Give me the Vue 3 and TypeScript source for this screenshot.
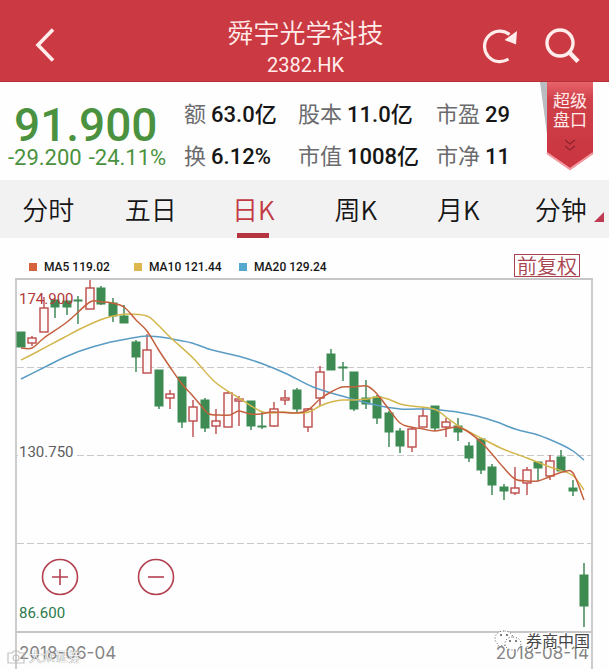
<script setup lang="ts">
import { computed, ref } from 'vue'

type Trend = 'up' | 'down'
type Candle = [Trend, number, number, number, number]
type Point = [number, number]

const stats = [
  { label: '额', value: '63.0亿' },
  { label: '股本', value: '11.0亿' },
  { label: '市盈', value: '29' },
  { label: '换', value: '6.12%' },
  { label: '市值', value: '1008亿' },
  { label: '市净', value: '11' },
]

const tabs = ['分时', '五日', '日K', '周K', '月K', '分钟']
const activeTab = ref('日K')

const legend = [
  { name: 'MA5', value: '119.02', tone: 'ma5' },
  { name: 'MA10', value: '121.44', tone: 'ma10' },
  { name: 'MA20', value: '129.24', tone: 'ma20' },
]

// trend, wick top, body top, body bottom, wick bottom
const candles: Candle[] = [
  ['down', 332, 332, 347, 347],
  ['up', 336, 338, 343, 346],
  ['up', 297, 308, 332, 332],
  ['down', 300, 300, 307, 318],
  ['down', 300, 301, 307, 315],
  ['down', 296, 300, 301, 324],
  ['up', 280, 288, 309, 309],
  ['down', 286, 288, 304, 305],
  ['down', 298, 303, 316, 322],
  ['down', 305, 316, 323, 323],
  ['down', 340, 342, 357, 372],
  ['up', 334, 350, 373, 373],
  ['down', 370, 370, 406, 409],
  ['up', 390, 394, 398, 409],
  ['down', 377, 377, 422, 428],
  ['up', 400, 407, 421, 437],
  ['down', 398, 400, 428, 432],
  ['up', 409, 421, 426, 434],
  ['up', 391, 393, 427, 427],
  ['up', 396, 399, 401, 426],
  ['down', 401, 401, 426, 430],
  ['down', 412, 426, 427, 429],
  ['up', 402, 409, 426, 427],
  ['up', 390, 398, 400, 405],
  ['down', 388, 390, 409, 412],
  ['up', 408, 409, 427, 432],
  ['up', 366, 372, 398, 406],
  ['down', 349, 354, 370, 370],
  ['down', 362, 367, 368, 381],
  ['down', 372, 372, 409, 411],
  ['down', 380, 398, 404, 409],
  ['down', 395, 397, 418, 424],
  ['down', 411, 413, 432, 447],
  ['down', 428, 431, 446, 453],
  ['up', 427, 429, 447, 452],
  ['up', 408, 416, 427, 427],
  ['down', 406, 406, 428, 431],
  ['up', 418, 422, 427, 437],
  ['down', 418, 426, 432, 441],
  ['down', 442, 446, 458, 462],
  ['down', 439, 439, 470, 474],
  ['down', 464, 467, 485, 495],
  ['down', 484, 487, 491, 500],
  ['up', 467, 488, 493, 495],
  ['up', 467, 470, 483, 495],
  ['down', 462, 462, 468, 481],
  ['up', 455, 461, 476, 480],
  ['down', 450, 457, 471, 471],
  ['down', 480, 488, 491, 496],
  ['down', 563, 575, 606, 627],
]

const STEP = 563 / 49
const bars = computed(() =>
  candles.map(([trend, high, top, bottom, low], i) => ({
    trend, high, top, bottom, low,
    x: Math.round(21 + i * STEP),
  })),
)

const averages: { tone: string; points: Point[] }[] = [
  {
    tone: 'ma20',
    points: [[21, 379], [47, 366], [63, 358], [83, 350], [107, 343], [127, 339], [147, 336], [167, 338],
      [177, 340], [192, 343], [212, 350], [238, 356], [263, 364], [287, 374], [313, 387], [342, 396],
      [367, 403], [380, 406], [400, 409], [427, 409], [440, 410], [457, 412], [477, 416], [497, 422],
      [515, 429], [538, 435], [560, 444], [573, 451], [584, 460]],
  },
  {
    tone: 'ma10',
    points: [[21, 360], [33, 354], [63, 338], [80, 329], [100, 320], [113, 316], [127, 314], [147, 316],
      [157, 324], [171, 338], [193, 358], [215, 382], [239, 398], [260, 411], [273, 413], [283, 412],
      [297, 413], [309, 412], [320, 406], [331, 402], [342, 400], [354, 400], [367, 399], [377, 397],
      [388, 399], [400, 404], [411, 406], [434, 409], [446, 417], [460, 427], [483, 439], [503, 449],
      [527, 458], [550, 467], [572, 475], [584, 490]],
  },
  {
    tone: 'ma5',
    points: [[21, 348], [32, 348], [44, 338], [67, 322], [90, 302], [101, 302], [112, 303], [124, 307],
      [136, 320], [147, 331], [158, 349], [170, 367], [182, 384], [192, 395], [203, 408], [209, 414],
      [220, 415], [230, 415], [239, 411], [250, 414], [260, 414], [273, 412], [297, 413], [308, 410],
      [320, 399], [331, 392], [342, 387], [354, 387], [367, 386], [377, 394], [388, 408], [400, 423],
      [411, 427], [423, 429], [434, 431], [446, 429], [457, 427], [467, 431], [482, 443], [492, 454],
      [503, 467], [515, 479], [527, 481], [538, 481], [549, 477], [563, 472], [573, 473], [584, 500]],
  },
]

// Catmull-Rom spline through the points, written as cubic segments
function curve(points: Point[]): string {
  let d = `M${points[0][0]} ${points[0][1]}`
  for (let i = 0; i < points.length - 1; i++) {
    const p0 = points[Math.max(i - 1, 0)]
    const p1 = points[i]
    const p2 = points[i + 1]
    const p3 = points[Math.min(i + 2, points.length - 1)]
    d += ` C${p1[0] + (p2[0] - p0[0]) / 6} ${p1[1] + (p2[1] - p0[1]) / 6}`
    d += ` ${p2[0] - (p3[0] - p1[0]) / 6} ${p2[1] - (p3[1] - p1[1]) / 6} ${p2[0]} ${p2[1]}`
  }
  return d
}
</script>

<template>
  <main class="page">
    <header class="header">
      <button class="icon-button" type="button" aria-label="返回">
        <svg width="20" height="34" viewBox="0 0 20 34"><path d="M18 1.500 3 17l15 15.500" fill="none" stroke="#ffeceb" stroke-width="3.600" /></svg>
      </button>
      <div class="heading">
        <h1>舜宇光学科技</h1>
        <p>2382.HK</p>
      </div>
      <div class="actions">
        <button class="icon-button" type="button" aria-label="刷新">
          <svg width="36" height="36" viewBox="0 0 36 36">
            <path d="M27.500 32A15.300 15.300 0 1 1 28.500 7.500" fill="none" stroke="#ffeceb" stroke-width="3.200" />
            <path d="M36 4 35 17.500 23.500 13Z" fill="#ffeceb" />
          </svg>
        </button>
        <button class="icon-button" type="button" aria-label="搜索">
          <svg width="36" height="36" viewBox="0 0 36 36">
            <circle cx="16" cy="16" r="13" fill="none" stroke="#ffeceb" stroke-width="3.400" />
            <path d="M25 25 34 34.500" fill="none" stroke="#ffeceb" stroke-width="4.600" />
          </svg>
        </button>
      </div>
    </header>

    <section class="quote">
      <div class="price">
        <strong>91.900</strong>
        <div class="change"><span>-29.200</span><span>-24.11%</span></div>
      </div>
      <dl class="stats">
        <div v-for="s in stats" :key="s.label" class="stat">
          <dt>{{ s.label }}</dt>
          <dd>{{ s.value }}</dd>
        </div>
      </dl>
      <button class="ribbon" type="button">
        <svg class="ribbon-shape" width="54" height="90" viewBox="0 0 54 90" aria-hidden="true">
          <defs>
            <linearGradient id="ribbon-fill" x1="0" y1="0" x2="0" y2="1">
              <stop offset="0" stop-color="#e8636b" />
              <stop offset="0.200" stop-color="#cf4049" />
              <stop offset="1" stop-color="#c9343f" />
            </linearGradient>
          </defs>
          <path d="M0 0H8V60Z" fill="#b9bcc0" />
          <path d="M7 0H53V72L30 88 7 72Z" fill="url(#ribbon-fill)" />
          <path d="M7 71 30 87 53 71" fill="none" stroke="#f59aa2" stroke-width="2" />
          <path d="M25 58l5 4 5-4M25 64l5 4 5-4" fill="none" stroke="#8f2530" stroke-width="1.300" />
        </svg>
        <span class="ribbon-text">超级<br />盘口</span>
      </button>
    </section>

    <nav class="tabs">
      <button
        v-for="tab in tabs"
        :key="tab"
        type="button"
        class="tab"
        :class="{ active: tab === activeTab }"
        @click="activeTab = tab"
      >
        <span>{{ tab }}</span>
        <i v-if="tab === '分钟'" class="corner"></i>
      </button>
    </nav>

    <div class="legend">
      <ul>
        <li v-for="l in legend" :key="l.name"><i :class="l.tone"></i>{{ l.name }} {{ l.value }}</li>
      </ul>
      <button class="adjust" type="button">前复权</button>
    </div>

    <section class="chart">
      <div class="plot">
        <svg class="canvas" viewBox="17 278 574 355" role="img" aria-label="日K">
          <path class="frame" d="M15 279H593M15 632H593" />
          <path class="grid" d="M17 367H591M17 455H591M17 543H591" />
          <rect class="label-back" x="18" y="443" width="58" height="16" />
          <g v-for="(b, i) in bars" :key="i" :class="b.trend">
            <path :d="`M${b.x} ${b.high}V${b.top}M${b.x} ${b.bottom}V${b.low}`" />
            <rect :x="b.x - 4" :y="b.top" width="8" :height="b.bottom - b.top" />
          </g>
          <path v-for="a in averages" :key="a.tone" class="average" :class="a.tone" :d="curve(a.points)" />
          <text class="axis top" x="19" y="304">174.900</text>
          <text class="axis" x="19" y="457">130.750</text>
          <text class="axis bottom" x="19" y="618">86.600</text>
        </svg>
        <div class="zoom">
          <button type="button" aria-label="放大">
            <svg width="38" height="38" viewBox="0 0 38 38"><circle cx="19" cy="19" r="17.500" /><path d="M11 19H27M19 11V27" /></svg>
          </button>
          <button type="button" aria-label="缩小">
            <svg width="38" height="38" viewBox="0 0 38 38"><circle cx="19" cy="19" r="17.500" /><path d="M11 19H27" /></svg>
          </button>
        </div>
      </div>
      <div class="dates">
        <time datetime="2018-06-04">2018-06-04</time>
        <time datetime="2018-08-14">2018-08-14</time>
      </div>
      <div class="mark mark-left">
        <svg width="18" height="14" viewBox="0 0 18 14"><path d="M1 3H5L7 1H11L13 3H17V13H1Z" /><circle cx="9" cy="8" r="3" /></svg>
        <span>大众证券</span>
      </div>
      <div class="mark mark-right">
        <svg width="28" height="23" viewBox="0 0 28 23">
          <path class="bubble" d="M10 1C5 1 1 4 1 8.500c0 2.500 1.500 4.500 3.500 6L4 17.500l3.500-2h4C16 15.500 19 12 19 8.500 19 4 15 1 10 1Z" />
          <path class="bubble" d="M18.500 7C14 7 11 10 11 13.500S14 20 18.500 20l2.500-.500 3.500 2-.500-3c2-1.500 3-3 3-5C27 10 23.500 7 18.500 7Z" />
          <path class="eyes" d="M6 5h2M12 5h2M15 11h2M21 11h2" />
        </svg>
        <span>券商中国</span>
      </div>
    </section>
  </main>
</template>

<style>
body {
  margin: 0;
  background: #fefefe;
}
</style>

<style scoped>
.page {
  font-family: Roboto, "Noto Sans CJK SC", sans-serif;
  color: #161616;
  background: #fefefe;
  overflow: hidden;
}

button {
  margin: 0;
  padding: 0;
  border: 0;
  background: none;
  color: inherit;
  font: inherit;
  cursor: pointer;
}

svg {
  display: block;
  overflow: visible;
}

.header {
  display: grid;
  grid-template-columns: 1fr auto 1fr;
  align-items: center;
  box-sizing: border-box;
  height: 82px;
  padding: 8px 29px 0 31px;
  background: #cb3a42;
  border-bottom: 1px solid #b5323b;
  color: #ffeceb;
}

.icon-button {
  justify-self: start;
}

.header > .icon-button {
  padding-left: 4px;
}

.heading {
  padding-top: 6px;
  text-align: center;
}

.heading h1 {
  margin: 0;
  font-family: "Noto Sans CJK SC", sans-serif;
  font-size: 26px;
  line-height: 34px;
  font-weight: 350;
}

.heading p {
  margin: 0;
  font-size: 20px;
  line-height: 32px;
}

.actions {
  display: flex;
  justify-content: flex-end;
  gap: 27px;
}

.quote {
  position: relative;
  display: grid;
  grid-template-columns: 176px 1fr;
  align-items: center;
  box-sizing: border-box;
  height: 98px;
  padding: 9px 72px 0 8px;
}

.price {
  color: #4b9240;
}

.price strong {
  display: block;
  padding-left: 6px;
  font-size: 46px;
  line-height: 44px;
  font-weight: 500;
}

.change {
  display: flex;
  gap: 7px;
  font-size: 22px;
  line-height: 22px;
}

.stats {
  display: grid;
  grid-template-columns: 114px 138px 1fr;
  margin: 0;
  font-size: 22px;
  line-height: 42px;
}

.stat {
  display: flex;
  gap: 5px;
  white-space: nowrap;
}

.stat dt {
  color: #6b6b6e;
}

.stat dd {
  margin: 0;
  font-weight: 500;
}

.ribbon {
  position: absolute;
  top: 0;
  right: 15px;
  width: 54px;
  height: 90px;
}

.ribbon-shape {
  position: absolute;
  inset: 0;
}

.ribbon-text {
  position: absolute;
  top: 10px;
  left: 13px;
  color: #ffeceb;
  font-size: 17px;
  line-height: 19px;
}

.tabs {
  display: grid;
  grid-template-columns: repeat(6, 1fr);
  height: 58px;
  margin: 0 -3px;
  background: #f3f2f3;
}

.tab {
  position: relative;
  font-family: "Noto Sans CJK SC", sans-serif;
  font-size: 26px;
  font-weight: 350;
  line-height: 58px;
}

.tab.active {
  color: #c23a44;
}

.tab.active::after {
  content: "";
  position: absolute;
  bottom: 0;
  left: calc(50% - 16px);
  width: 32px;
  height: 5px;
  background: #b5343f;
}

.corner {
  position: absolute;
  right: 8px;
  bottom: 16px;
  border-left: 10px solid transparent;
  border-bottom: 10px solid #bd3a52;
}

.legend {
  display: flex;
  justify-content: space-between;
  align-items: center;
  height: 40px;
  padding: 0 29px;
  font-size: 12px;
  font-weight: 500;
}

.legend ul {
  display: grid;
  grid-template-columns: repeat(3, 105px);
  margin: 0;
  padding: 18px 0 0;
  list-style: none;
  line-height: 20px;
}

.legend li {
  display: flex;
  align-items: center;
  white-space: nowrap;
}

.legend i {
  width: 8px;
  height: 8px;
  margin-right: 7px;
}

i.ma5 { background: #d5623a; }
i.ma10 { background: #dcb64e; }
i.ma20 { background: #56a8cf; }

.adjust {
  box-sizing: border-box;
  height: 23px;
  margin-top: 14px;
  padding: 0 2px;
  border: 1px solid #a8434f;
  color: #a8434f;
  font-family: "Noto Sans CJK SC", sans-serif;
  font-size: 20px;
  font-weight: 350;
  line-height: 21px;
}

.chart {
  position: relative;
  margin: 0 16px 0 15px;
  border: solid #cdcdcd;
  border-width: 0 2px;
}

.plot {
  position: relative;
}

.canvas {
  width: 100%;
}

.frame {
  stroke: #c6c6c6;
  stroke-width: 2;
}

.grid {
  stroke: #cbc7ca;
  stroke-width: 1;
  stroke-dasharray: 7 3;
  shape-rendering: crispEdges;
}

.label-back {
  fill: #fefefe;
}

.axis {
  fill: #5d5d5f;
  font-size: 15px;
}

.axis.top { fill: #b23a3a; }
.axis.bottom { fill: #2c7a4c; }

.up path,
.up rect {
  fill: none;
  stroke: #bd4a4a;
  stroke-width: 1.4;
}

.up rect {
  fill: #fffafa;
}

.down path {
  stroke: #34804c;
  stroke-width: 1.4;
}

.down rect {
  fill: #3d8b52;
  stroke: #3d8b52;
  stroke-width: 1;
}

.average {
  fill: none;
  stroke-width: 1.5;
}

.average.ma5 { stroke: #c4603e; }
.average.ma10 { stroke: #d3b64b; }
.average.ma20 { stroke: #5a9cc4; }

.zoom {
  position: absolute;
  left: 24px;
  bottom: 37px;
  display: flex;
  gap: 58px;
}

.zoom svg {
  fill: none;
  stroke: #b2404f;
  stroke-width: 1.6;
}

.dates {
  display: flex;
  justify-content: space-between;
  padding: 4px 2px 0;
  color: #858585;
  font-family: Inter, sans-serif;
  font-size: 17px;
  line-height: 32px;
}

.mark {
  position: absolute;
  display: flex;
  align-items: center;
  pointer-events: none;
}

.mark-left {
  left: -10px;
  bottom: 4px;
  gap: 4px;
  color: #f4f4f4;
  font-size: 13px;
  line-height: 16px;
  text-shadow: 0 0 1px #777, 0 0 1px #888;
  opacity: 0.8;
}

.mark-left svg {
  fill: none;
  stroke: #b5b5b5;
  stroke-width: 1.2;
}

.mark-right {
  right: 1px;
  bottom: 16px;
  gap: 4px;
  color: #454545;
  font-size: 16px;
  line-height: 22px;
  text-shadow: 1px 1px 0 #fff, -1px -1px 0 #fff;
}

.bubble {
  fill: #fefefe;
  stroke: #666;
  stroke-width: 1;
  stroke-dasharray: 1 2;
}

.eyes {
  stroke: #555;
  stroke-width: 1.5;
}
</style>
